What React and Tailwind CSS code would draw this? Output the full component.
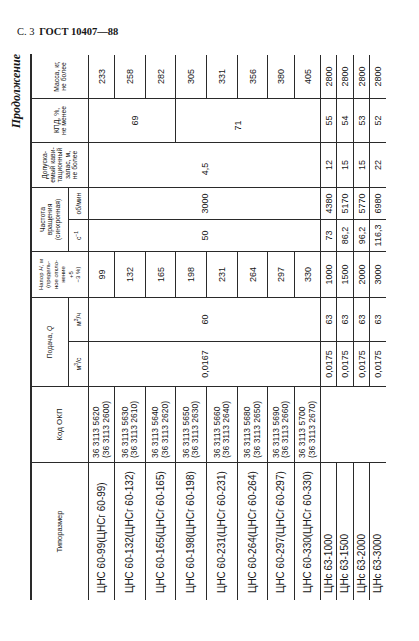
import React from 'react';
import clsx from 'clsx';

const rowStart = [
  'row-start-3', 'row-start-4', 'row-start-5', 'row-start-6', 'row-start-7', 'row-start-8',
  'row-start-9', 'row-start-10', 'row-start-11', 'row-start-12', 'row-start-13', 'row-start-14'
];

const pumps = [
  { name: 'ЦНС 60-99(ЦНСг 60-99)', code: ['36 3113 5620', '(36 3113 2600)'], head: '99', mass: '233' },
  { name: 'ЦНС 60-132(ЦНСг 60-132)', code: ['36 3113 5630', '(36 3113 2610)'], head: '132', mass: '258' },
  { name: 'ЦНС 60-165(ЦНСг 60-165)', code: ['36 3113 5640', '(36 3113 2620)'], head: '165', mass: '282' },
  { name: 'ЦНС 60-198(ЦНСг 60-198)', code: ['36 3113 5650', '(36 3113 2630)'], head: '198', mass: '305' },
  { name: 'ЦНС 60-231(ЦНСг 60-231)', code: ['36 3113 5660', '(36 3113 2640)'], head: '231', mass: '331' },
  { name: 'ЦНС 60-264(ЦНСг 60-264)', code: ['36 3113 5680', '(36 3113 2650)'], head: '264', mass: '356' },
  { name: 'ЦНС 60-297(ЦНСг 60-297)', code: ['36 3113 5690', '(36 3113 2660)'], head: '297', mass: '380' },
  { name: 'ЦНС 60-330(ЦНСг 60-330)', code: ['36 3113 5700', '(36 3113 2670)'], head: '330', mass: '405' },
  { name: 'ЦНс 63-1000', head: '1000', mass: '2800', q: '0,0175', qh: '63', s: '73', rpm: '4380', npsh: '12', eff: '55' },
  { name: 'ЦНс 63-1500', head: '1500', mass: '2800', q: '0,0175', qh: '63', s: '86,2', rpm: '5170', npsh: '15', eff: '54' },
  { name: 'ЦНс 63-2000', head: '2000', mass: '2800', q: '0,0175', qh: '63', s: '96,2', rpm: '5770', npsh: '15', eff: '53' },
  { name: 'ЦНс 63-3000', head: '3000', mass: '2800', q: '0,0175', qh: '63', s: '116,3', rpm: '6980', npsh: '22', eff: '52' }
];

const Cell = ({ className, children }) => (
  <div className={clsx('flex items-center justify-center border-[#2a2a2a] text-center', className)}>
    {children}
  </div>
);

const Head = ({ className, children }) => (
  <Cell className={clsx('border-r border-b text-[6.8px] leading-[7.5px]', className)}>
    <div>{children}</div>
  </Cell>
);

export default function App() {
  return (
    <div className="w-[419px] h-[641px] overflow-hidden bg-white text-[#161616] font-['Liberation_Sans',Arial,sans-serif]">
      <div className="pt-[25px] pl-[17px] text-[10.5px] leading-[13px] font-['Liberation_Serif','Times_New_Roman',serif]">
        С. 3 <span className="ml-[2px] font-bold">ГОСТ 10407—88</span>
      </div>

      <div className="mt-[12px] w-[400px] h-[580px]">
        {/* table is laid out upright, then turned a quarter turn as on the printed page */}
        <div className="w-[580px] h-[400px] origin-top-left [transform:rotate(-90deg)_translateX(-100%)] pl-[30px] pr-[4px] pt-[9px]">
          <div className="h-[15px] text-right text-[12px] leading-[15px] italic font-bold font-['Liberation_Serif','Times_New_Roman',serif]">
            Продолжение
          </div>

          <div className="mt-[6px] grid grid-cols-[138px_76px_45px_44px_46px_32px_32px_45px_44px_43px] grid-rows-[37px_20px_26px_31px_30px_31px_31px_30px_27px_26px_16px_17px_16px_16px] border-t-2 border-[#2a2a2a] text-[9px] leading-[10px]">
            {/* header */}
            <Head className="col-start-1 row-start-1 row-span-2 text-[7.5px]">Типоразмер</Head>
            <Head className="col-start-2 row-start-1 row-span-2 text-[8px]">Код ОКП</Head>
            <Head className="col-start-3 col-span-2 row-start-1">Подача, <i>Q</i></Head>
            <Head className="col-start-3 row-start-2">м<sup className="text-[5px]">3</sup>/с</Head>
            <Head className="col-start-4 row-start-2">м<sup className="text-[5px]">3</sup>/ч</Head>
            <Head className="col-start-5 row-start-1 row-span-2 text-[6px] leading-[6.5px]">
              Напор <i>H</i>, м<br />(предель-<br />ное откло-<br />нение<br />+5<br />−3 %)
            </Head>
            <Head className="col-start-6 col-span-2 row-start-1">Частота<br />вращения<br />(синхронная)</Head>
            <Head className="col-start-6 row-start-2">с<sup className="text-[5px]">−1</sup></Head>
            <Head className="col-start-7 row-start-2">об/мин</Head>
            <Head className="col-start-8 row-start-1 row-span-2">Допуска-<br />емый кави-<br />тационный<br />запас, м,<br />не более</Head>
            <Head className="col-start-9 row-start-1 row-span-2">КПД, %,<br />не менее</Head>
            <Head className="col-start-10 row-start-1 row-span-2 border-r-0">Масса, кг,<br />не более</Head>

            {/* per-row cells */}
            {pumps.map((p, i) => (
              <React.Fragment key={p.name}>
                <Cell className={clsx('col-start-1 justify-start pl-[7px] border-r whitespace-nowrap text-[10px]', rowStart[i], i < 11 && 'border-b')}>
                  {p.name}
                </Cell>
                {p.code && (
                  <Cell className={clsx('col-start-2 justify-start pl-[4px] border-r border-b whitespace-nowrap text-[8.5px] leading-[9.5px] text-left', rowStart[i])}>
                    <div>{p.code[0]}<br />{p.code[1]}</div>
                  </Cell>
                )}
                <Cell className={clsx('col-start-5 border-r', rowStart[i], i < 11 && 'border-b')}>{p.head}</Cell>
                {p.q && (
                  <>
                    <Cell className={clsx('col-start-3 border-r', rowStart[i], i < 11 && 'border-b')}>{p.q}</Cell>
                    <Cell className={clsx('col-start-4 border-r', rowStart[i], i < 11 && 'border-b')}>{p.qh}</Cell>
                    <Cell className={clsx('col-start-6 border-r', rowStart[i], i < 11 && 'border-b')}>{p.s}</Cell>
                    <Cell className={clsx('col-start-7 border-r', rowStart[i], i < 11 && 'border-b')}>{p.rpm}</Cell>
                    <Cell className={clsx('col-start-8 border-r', rowStart[i], i < 11 && 'border-b')}>{p.npsh}</Cell>
                    <Cell className={clsx('col-start-9 border-r', rowStart[i], i < 11 && 'border-b')}>{p.eff}</Cell>
                  </>
                )}
                <Cell className={clsx('col-start-10', rowStart[i], i < 11 && 'border-b')}>{p.mass}</Cell>
              </React.Fragment>
            ))}

            {/* merged cells */}
            <Cell className="col-start-2 row-start-11 row-span-4 border-r" />
            <Cell className="col-start-3 row-start-3 row-span-8 border-r border-b">0,0167</Cell>
            <Cell className="col-start-4 row-start-3 row-span-8 border-r border-b">60</Cell>
            <Cell className="col-start-6 row-start-3 row-span-8 border-r border-b">50</Cell>
            <Cell className="col-start-7 row-start-3 row-span-8 border-r border-b">3000</Cell>
            <Cell className="col-start-8 row-start-3 row-span-8 border-r border-b pr-[8px]">4,5</Cell>
            <Cell className="col-start-9 row-start-3 row-span-3 border-r border-b pt-[6px]">69</Cell>
            <Cell className="col-start-9 row-start-6 row-span-5 border-r border-b pb-[20px] pr-[10px]">71</Cell>
          </div>
        </div>
      </div>
    </div>
  );
}
